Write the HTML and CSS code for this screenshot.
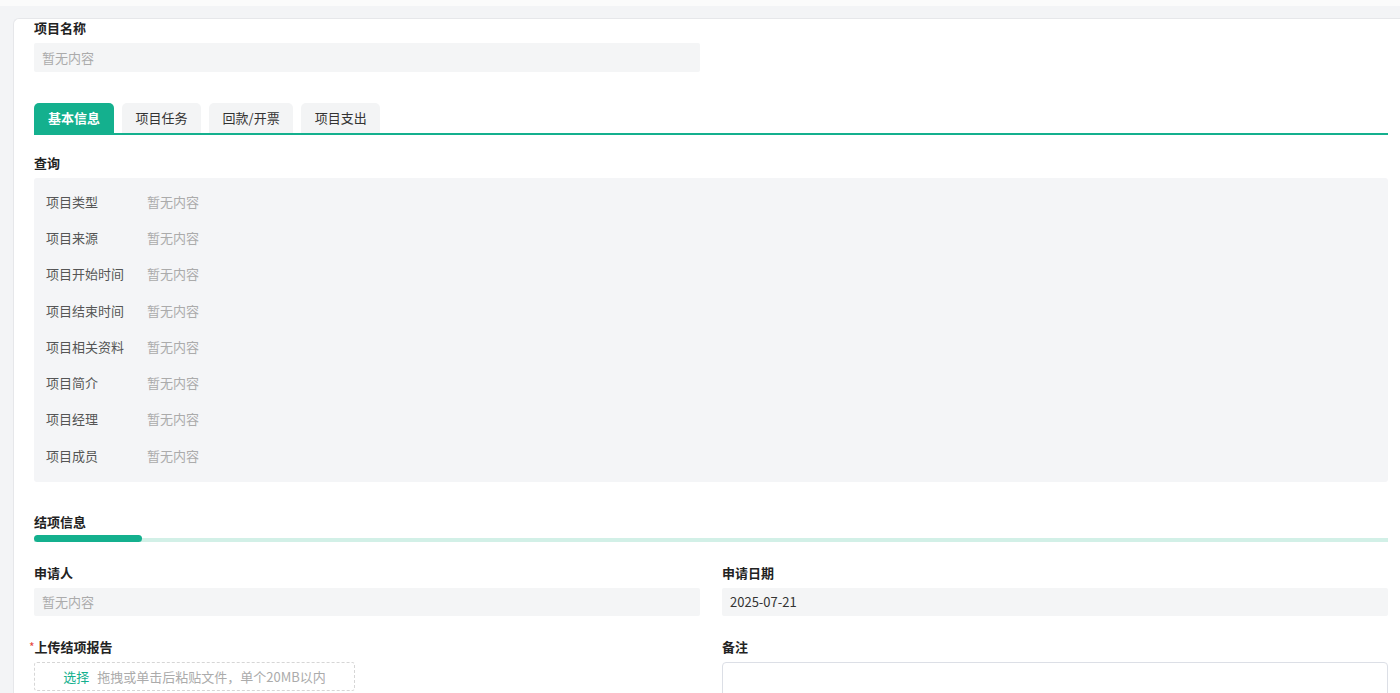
FILE: index.html
```html
<!DOCTYPE html>
<html>
<head>
    <meta charset="UTF-8">
    <title>项目结项</title>
    <link rel="stylesheet" href="styles.css">
</head>
<body>
    <div class="topbar"></div>
    <div class="page">
        <div class="card">
            <div class="grid">
                <div class="field">
                    <div class="label">项目名称</div>
                    <div class="input placeholder">暂无内容</div>
                </div>
                <div></div>
            </div>

            <div class="tabs">
                <div class="tab active">基本信息</div>
                <div class="tab">项目任务</div>
                <div class="tab">回款/开票</div>
                <div class="tab">项目支出</div>
            </div>

            <div class="section-title">查询</div>
            <div class="query-panel">
                <div class="row"><span class="row-label">项目类型</span><span class="row-value">暂无内容</span></div>
                <div class="row"><span class="row-label">项目来源</span><span class="row-value">暂无内容</span></div>
                <div class="row"><span class="row-label">项目开始时间</span><span class="row-value">暂无内容</span></div>
                <div class="row"><span class="row-label">项目结束时间</span><span class="row-value">暂无内容</span></div>
                <div class="row"><span class="row-label">项目相关资料</span><span class="row-value">暂无内容</span></div>
                <div class="row"><span class="row-label">项目简介</span><span class="row-value">暂无内容</span></div>
                <div class="row"><span class="row-label">项目经理</span><span class="row-value">暂无内容</span></div>
                <div class="row"><span class="row-label">项目成员</span><span class="row-value">暂无内容</span></div>
            </div>

            <div class="section-title closing">结项信息</div>
            <div class="progress">
                <div class="progress-fill"></div>
            </div>

            <div class="grid form">
                <div class="field">
                    <div class="label">申请人</div>
                    <div class="input placeholder small">暂无内容</div>
                </div>
                <div class="field">
                    <div class="label">申请日期</div>
                    <div class="input small">2025-07-21</div>
                </div>
                <div class="field">
                    <div class="label required">上传结项报告</div>
                    <div class="upload">
                        <span class="upload-link">选择</span>
                        <span>拖拽或单击后粘贴文件，单个20MB以内</span>
                    </div>
                </div>
                <div class="field">
                    <div class="label">备注</div>
                    <textarea class="remark"></textarea>
                </div>
            </div>
        </div>
    </div>
</body>
</html>
```

FILE: styles.css
```css
* {
    box-sizing: border-box;
}

body {
    margin: 0;
    background-color: #f3f4f6;
    font-family: "Noto Sans CJK SC", "Noto Sans", sans-serif;
    font-size: 13px;
    color: #333;
    height: 693px;
    overflow: hidden;
}

.topbar {
    height: 6px;
    background-color: #fbfbfb;
}

.page {
    padding: 12px 0 0 13px;
}

.card {
    background-color: #fff;
    border: 1px solid #e6e7ea;
    border-right: none;
    border-radius: 6px 0 0 0;
    padding: 0 12px 0 20px;
    min-height: 700px;
}

.grid {
    display: grid;
    grid-template-columns: 1fr 1fr;
    column-gap: 22px;
}

.label {
    font-weight: bold;
    color: #222;
    line-height: 18px;
    margin-bottom: 6px;
}

.label.required::before {
    content: "*";
    color: #e5483d;
    font-weight: normal;
    margin-left: -5px;
    font-size: 12px;
    vertical-align: top;
}

.input {
    height: 29px;
    line-height: 29px;
    background-color: #f4f5f6;
    border-radius: 2px;
    padding: 0 8px;
    color: #333;
}

.input.small {
    height: 28px;
    line-height: 28px;
}

.input.placeholder {
    color: #ababab;
}

.tabs {
    display: flex;
    gap: 8px;
    margin-top: 31px;
    border-bottom: 2px solid #14b08e;
}

.tab {
    height: 30px;
    line-height: 30px;
    padding: 0 13.5px;
    background-color: #f3f4f5;
    border-radius: 5px 5px 0 0;
    color: #333;
}

.tab.active {
    padding: 0 14px;
    background-color: #14b08e;
    color: #fff;
    font-weight: bold;
}

.section-title {
    font-weight: bold;
    color: #222;
    line-height: 18px;
    margin-top: 19px;
    margin-bottom: 6px;
}

.section-title.closing {
    margin-top: 31px;
    margin-bottom: 4px;
}

.query-panel {
    background-color: #f4f5f7;
    border-radius: 3px;
    padding: 5px 12px 9px;
}

.row {
    display: flex;
    align-items: center;
    height: 36.3px;
}

.row-label {
    width: 101px;
    color: #555;
}

.row-value {
    color: #ababab;
}

.progress {
    display: flex;
    align-items: flex-end;
    height: 7px;
    background: linear-gradient(to bottom, transparent 3px, #d2f0e7 3px);
}

.progress-fill {
    width: 108px;
    height: 7px;
    background-color: #14b08e;
    border-radius: 4px;
}

.form {
    margin-top: 22px;
    row-gap: 22px;
}

.upload {
    width: 321px;
    height: 29px;
    border: 1px dashed #d6d6d6;
    border-radius: 3px;
    display: flex;
    align-items: center;
    justify-content: center;
    gap: 8px;
    color: #ababab;
}

.upload-link {
    color: #14b08e;
}

.remark {
    display: block;
    width: 100%;
    height: 60px;
    border: 1px solid #dcdfe6;
    border-radius: 4px;
    resize: none;
    font-family: inherit;
}
```
